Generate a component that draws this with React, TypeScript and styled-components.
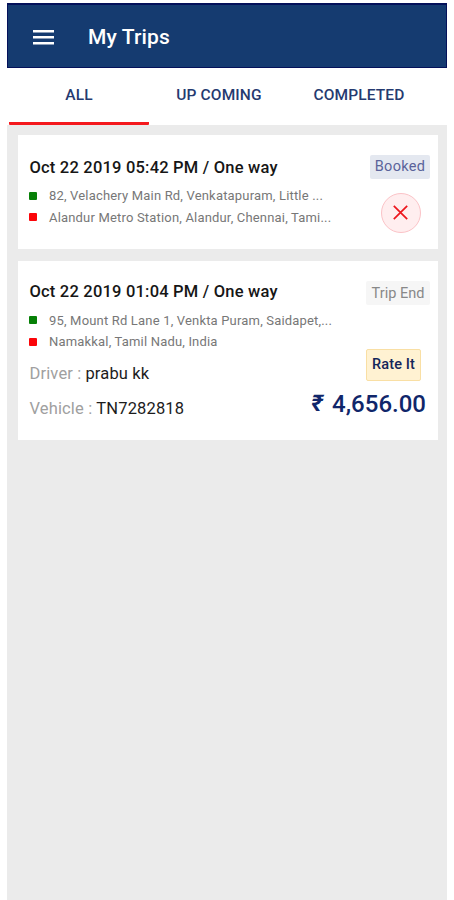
import React from "react";
import styled, { createGlobalStyle } from "styled-components";

const GlobalStyle = createGlobalStyle`
  * { box-sizing: border-box; }
  body { margin: 0; background: #fff; font-family: Roboto, "Liberation Sans", sans-serif; }
`;

const Page = styled.div`
  height: 900px;
  padding: 3px 7px 0 7.4px;
  overflow: hidden;
`;

const Screen = styled.main`
  display: flex;
  flex-direction: column;
  height: 897px;
  width: 439.6px;
  background: #ebebeb;
`;

const Header = styled.header`
  display: flex;
  align-items: center;
  gap: 34px;
  height: 65px;
  padding: 2px 0 0 24.6px;
  background: #153b70;
  border: 1px solid #04115a;
  border-top-width: 2px;
  color: #fff;
`;

const Heading = styled.h1`
  margin: 0;
  font-size: 21px;
  line-height: 26px;
  font-weight: 500;
  letter-spacing: 0.15px;
`;

const Tabs = styled.nav`
  display: grid;
  grid-template-columns: repeat(3, 140px);
  height: 56.5px;
  padding-left: 1.6px;
  background: #fff;
`;

const Tab = styled.button<{ $active?: boolean }>`
  border: 0;
  border-bottom: 3px solid ${(p) => (p.$active ? "#f4191d" : "transparent")};
  border-radius: 1px;
  background: none;
  padding: 1px 0 0;
  font: 500 15.5px/20px Roboto, sans-serif;
  letter-spacing: 0.12px;
  color: #253a70;
  white-space: nowrap;
`;

const TripList = styled.section`
  display: flex;
  flex-direction: column;
  gap: 12px;
  padding: 10px 9px 0 10.6px;
`;

const Card = styled.article<{ $height: number }>`
  display: grid;
  grid-template-columns: minmax(0, 1fr) auto;
  height: ${(p) => p.$height}px;
  padding: 0 8px 0 11.5px;
  background: #fff;
  white-space: nowrap;
`;

const Info = styled.div<{ $top: number }>`
  min-width: 0;
  padding-top: ${(p) => p.$top}px;
`;

const Title = styled.h2`
  margin: 0 0 5.5px;
  font-size: 16.5px;
  line-height: 24px;
  font-weight: 500;
  letter-spacing: 0.2px;
  color: #161616;
`;

const Stop = styled.div`
  display: flex;
  align-items: center;
  gap: 11.5px;
  height: 21.5px;
  font-size: 13px;
  letter-spacing: 0.18px;
  color: #777;
`;

const Marker = styled.span<{ $color: string }>`
  flex: none;
  width: 8px;
  height: 8px;
  border-radius: 1px;
  background: ${(p) => p.$color};
`;

const Details = styled.dl`
  margin: 4px 0 0;
`;

const Detail = styled.div`
  display: flex;
  gap: 4px;
  height: 34.5px;
  align-items: center;
  font-size: 16.5px;
  letter-spacing: 0.15px;
  dt { color: #a0a0a0; }
  dd { margin: 0; color: #1c1c1c; }
`;

const Side = styled.div`
  display: flex;
  flex-direction: column;
  align-items: flex-end;
  padding-top: 20px;
`;

const Badge = styled.span<{ $booked?: boolean }>`
  display: flex;
  align-items: center;
  justify-content: center;
  width: ${(p) => (p.$booked ? 60 : 64)}px;
  height: 24px;
  border-radius: 2px;
  background: ${(p) => (p.$booked ? "#e4e8f0" : "#f6f6f6")};
  color: ${(p) => (p.$booked ? "#5a639a" : "#888")};
  font-size: 14.5px;
  letter-spacing: ${(p) => (p.$booked ? 0.3 : 0)}px;
`;

const CancelButton = styled.button`
  display: flex;
  align-items: center;
  justify-content: center;
  width: 40px;
  height: 40px;
  margin: 14px 9px 0 0;
  padding: 0;
  border: 1px solid #fbc3c7;
  border-radius: 50%;
  background: #ffeeef;
`;

const RateButton = styled.button`
  width: 55px;
  height: 32px;
  margin: 44px 9px 0 0;
  padding: 0;
  border: 1px solid #f9dfa4;
  border-radius: 2px;
  background: #fff2d2;
  color: #14265a;
  font: 500 14.5px/20px Roboto, sans-serif;
  letter-spacing: 0.1px;
`;

const Fare = styled.div`
  display: flex;
  align-items: center;
  gap: 9px;
  margin: 9px 4px 0 0;
  color: #10266a;
  font-size: 24px;
  line-height: 28px;
  font-weight: 500;
`;

const Rupee = styled.span`
  font-size: 23px;
  font-style: italic;
  font-weight: 700;
`;

function MenuIcon() {
  return (
    <svg width="21" height="15" viewBox="0 0 21 15" fill="#fff" aria-hidden="true">
      <path d="M0 0h21v2.5H0zM0 6h21v2.5H0zM0 12h21v2.5H0z" />
    </svg>
  );
}

function CrossIcon() {
  return (
    <svg width="15" height="15" viewBox="0 0 15 15" stroke="#ed161d" strokeWidth="1.7" aria-hidden="true">
      <path d="M.8.8l13.4 13.4M14.2.8L.8 14.2" />
    </svg>
  );
}

interface TripInfoProps {
  title: string;
  from: string;
  to: string;
  top: number;
  children?: React.ReactNode;
}

function TripInfo({ title, from, to, top, children }: TripInfoProps) {
  return (
    <Info $top={top}>
      <Title>{title}</Title>
      <Stop><Marker $color="#078007" />{from}</Stop>
      <Stop><Marker $color="#fb0509" />{to}</Stop>
      {children}
    </Info>
  );
}

export default function App() {
  return (
    <Page>
      <GlobalStyle />
      <Screen>
        <Header><MenuIcon /><Heading>My Trips</Heading></Header>
        <Tabs>
          <Tab $active>ALL</Tab>
          <Tab>UP COMING</Tab>
          <Tab>COMPLETED</Tab>
        </Tabs>
        <TripList>
          <Card $height={114.5}>
            <TripInfo
              top={21}
              title="Oct 22 2019 05:42 PM / One way"
              from="82, Velachery Main Rd, Venkatapuram, Little ..."
              to="Alandur Metro Station, Alandur, Chennai, Tami..."
            />
            <Side>
              <Badge $booked>Booked</Badge>
              <CancelButton aria-label="Cancel trip"><CrossIcon /></CancelButton>
            </Side>
          </Card>
          <Card $height={178.5}>
            <TripInfo
              top={19}
              title="Oct 22 2019 01:04 PM / One way"
              from="95, Mount Rd Lane 1, Venkta Puram, Saidapet,..."
              to="Namakkal, Tamil Nadu, India"
            >
              <Details>
                <Detail><dt>Driver :</dt><dd>prabu kk</dd></Detail>
                <Detail><dt>Vehicle :</dt><dd>TN7282818</dd></Detail>
              </Details>
            </TripInfo>
            <Side>
              <Badge>Trip End</Badge>
              <RateButton>Rate It</RateButton>
              <Fare><Rupee>₹</Rupee>4,656.00</Fare>
            </Side>
          </Card>
        </TripList>
      </Screen>
    </Page>
  );
}
